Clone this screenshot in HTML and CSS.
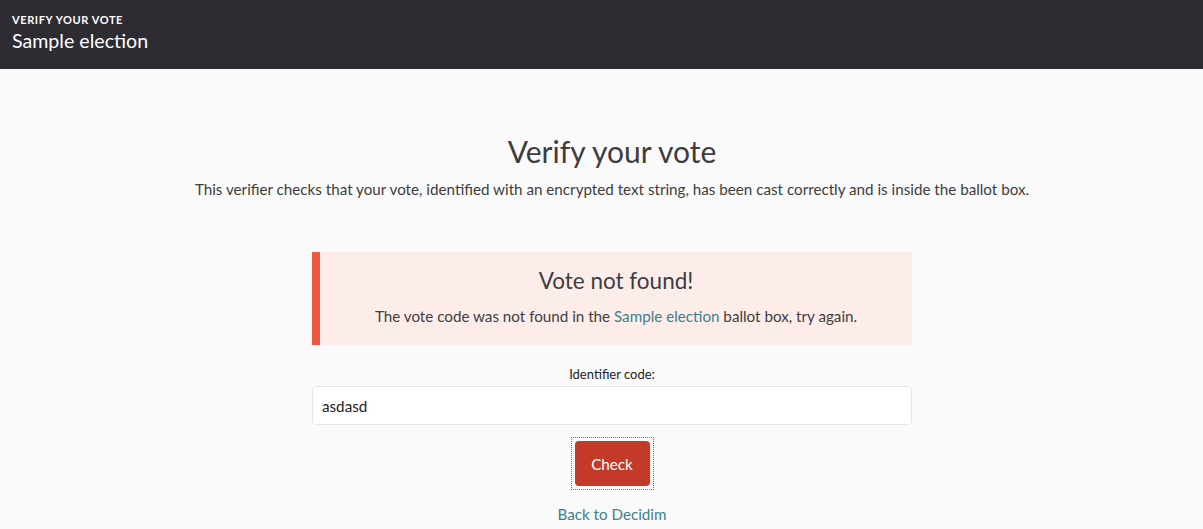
FILE: index.html
```html
<!DOCTYPE html>
<html lang="en">
<head>
<meta charset="utf-8">
<title>Verify your vote</title>
<link rel="stylesheet" href="styles.css">
</head>
<body>
<header class="topbar">
  <div class="topbar-kicker">VERIFY YOUR VOTE</div>
  <div class="topbar-title">Sample election</div>
</header>
<main class="content">
  <h1 class="title">Verify your vote</h1>
  <p class="lead">This verifier checks that your vote, identified with an encrypted text string, has been cast correctly and is inside the ballot box.</p>
  <section class="form-wrap">
    <div class="callout">
      <h2 class="callout-title">Vote not found!</h2>
      <p class="callout-text">The vote code was not found in the <a class="link" href="#">Sample election</a> ballot box, try again.</p>
    </div>
    <label class="field-label" for="code">Identifier code:</label>
    <input class="field-input" id="code" type="text" value="asdasd">
    <div class="actions">
      <span class="focus-ring"><button class="btn" type="button">Check</button></span>
    </div>
    <a class="link back" href="#">Back to Decidim</a>
  </section>
</main>
</body>
</html>
```
FILE: styles.css
```css
* { box-sizing: border-box; }
html, body { margin: 0; padding: 0; }
body {
  background: #fafafa;
  font-family: "Lato", "Liberation Sans", sans-serif;
  color: #3d3d3d;
}
.topbar {
  background: #2e2b32;
  color: #fff;
  height: 69px;
  padding: 13px 12px 0;
}
.topbar-kicker {
  font-size: 11px;
  font-weight: 700;
  letter-spacing: 0.6px;
  line-height: 14px;
}
.topbar-title {
  font-size: 19.6px;
  line-height: 28px;
}
.content {
  display: flex;
  flex-direction: column;
  align-items: center;
  padding: 62px 0 0 21px;
}
.title {
  margin: 0;
  font-size: 30px;
  font-weight: 400;
  line-height: 40px;
}
.lead {
  margin: 6px 0 0;
  font-size: 15.2px;
  line-height: 24px;
}
.form-wrap {
  width: 600px;
  margin-top: 51px;
  display: flex;
  flex-direction: column;
  align-items: center;
}
.callout {
  width: 100%;
  background: #fdedea;
  border-left: 8px solid #ee5a40;
  padding: 14px 16px 17px;
  text-align: center;
}
.callout-title {
  margin: 0;
  font-size: 22.5px;
  font-weight: 400;
  line-height: 30px;
}
.callout-text {
  margin: 8px 0 0;
  font-size: 15.2px;
  line-height: 24px;
}
.link {
  color: #3f7f89;
  text-decoration: none;
}
.field-label {
  margin-top: 20px;
  font-size: 13px;
  line-height: 18px;
  color: #222;
}
.field-input {
  margin-top: 3px;
  width: 100%;
  height: 39px;
  border: 1px solid #e6e6e6;
  border-radius: 4px;
  background: #fff;
  padding: 0 9px;
  font-family: inherit;
  font-size: 15.2px;
  color: #222;
}
.actions {
  margin-top: 12px;
}
.focus-ring {
  display: inline-block;
  padding: 3px;
  border: 1px dotted #777;
}
.btn {
  display: block;
  width: 75px;
  height: 45px;
  border: 0;
  border-radius: 4px;
  background: #c33a29;
  color: #fff;
  font-family: inherit;
  font-size: 15.2px;
  padding: 0;
}
.back {
  margin-top: 12px;
  font-size: 15.2px;
  line-height: 24px;
}
```
